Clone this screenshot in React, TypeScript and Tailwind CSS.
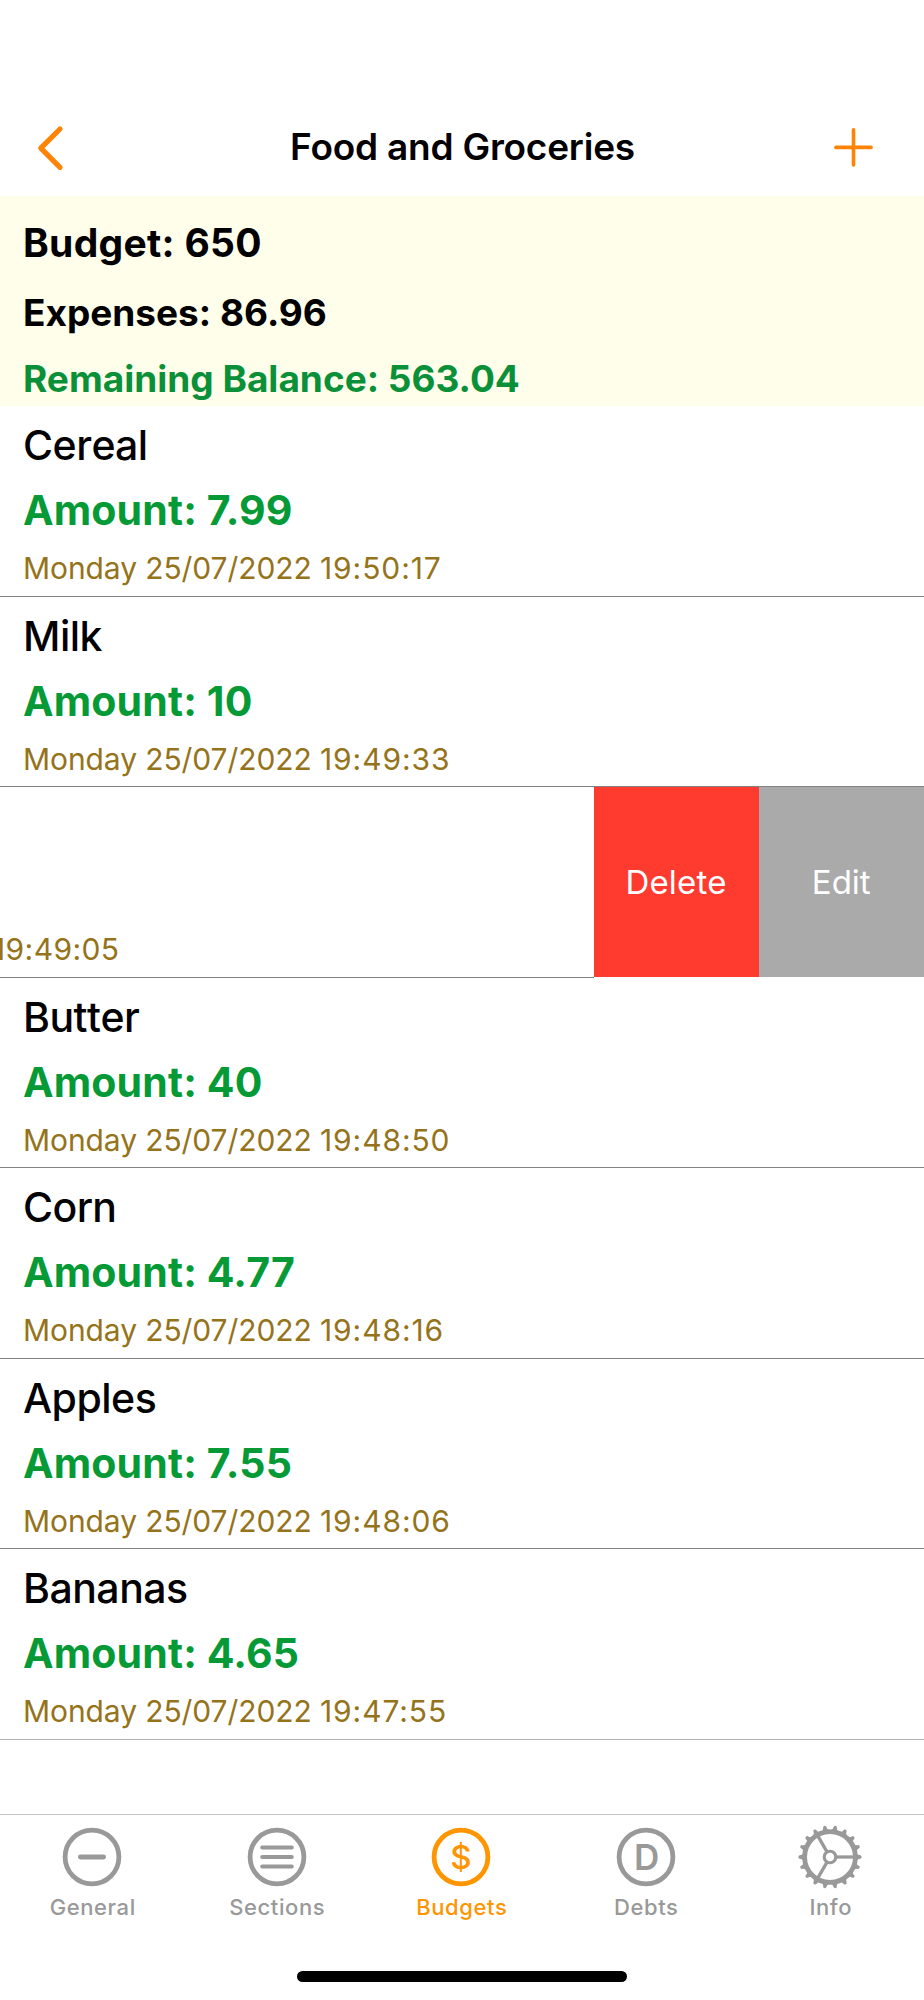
import type { ReactNode } from 'react';

type Expense = {
    id: number;
    name?: string;
    amount?: string;
    date: string;
    time: string;
    swiped?: boolean;
}

const expenses: Expense[] = [
    { id: 1, name: 'Cereal', amount: '7.99', date: 'Monday 25/07/2022', time: '19:50:17' },
    { id: 2, name: 'Milk', amount: '10', date: 'Monday 25/07/2022', time: '19:49:33' },
    { id: 3, date: 'Monday 25/07/2022', time: '19:49:05', swiped: true },
    { id: 4, name: 'Butter', amount: '40', date: 'Monday 25/07/2022', time: '19:48:50' },
    { id: 5, name: 'Corn', amount: '4.77', date: 'Monday 25/07/2022', time: '19:48:16' },
    { id: 6, name: 'Apples', amount: '7.55', date: 'Monday 25/07/2022', time: '19:48:06' },
    { id: 7, name: 'Bananas', amount: '4.65', date: 'Monday 25/07/2022', time: '19:47:55' },
];

const CircleIcon = ({ children }: { children: ReactNode }) => (
    <svg viewBox="-32 -32 64 64" className="w-16 h-16" fill="none" stroke="currentColor" strokeWidth="4.8" strokeLinecap="round">
        <circle r="26.9" />
        {children}
    </svg>
);

const GearIcon = () => (
    <svg viewBox="-32 -32 64 64" className="w-16 h-16" fill="none" stroke="currentColor">
        <circle r="25.4" strokeWidth="4.8" />
        {Array.from({ length: 18 }, (_, i) => (
            <path
                key={i}
                d="M26 -4 Q28.2 -1.7 31 -1.4 Q32.2 0 31 1.4 Q28.2 1.7 26 4 Z"
                fill="currentColor"
                stroke="none"
                transform={`rotate(${i * 20})`}
            />
        ))}
        {[0, 120, 240].map((angle) => (
            <path key={angle} d="M6 0H25" strokeWidth="3.3" transform={`rotate(${angle})`} />
        ))}
        <circle r="5.8" strokeWidth="3.1" />
    </svg>
);

const tabs = [
    { label: 'General', icon: <CircleIcon><path d="M-11.6 0H11.6" /></CircleIcon> },
    { label: 'Sections', icon: <CircleIcon><path d="M-14.8 -9.5H14.8M-14.8 0H14.8M-14.8 9.5H14.8" strokeWidth="4" /></CircleIcon> },
    {
        label: 'Budgets',
        active: true,
        icon: <CircleIcon><text x="0" y="11.8" textAnchor="middle" fill="currentColor" stroke="none" fontSize="33" fontWeight="500">$</text></CircleIcon>,
    },
    {
        label: 'Debts',
        icon: <CircleIcon><text x="0.6" y="12.6" textAnchor="middle" fill="currentColor" stroke="none" fontSize="35" fontWeight="600">D</text></CircleIcon>,
    },
    { label: 'Info', icon: <GearIcon /> },
];

const Timestamp = ({ expense }: { expense: Expense }) => (
    <p className="text-[30px] leading-[43px] text-[#94731a] whitespace-nowrap">
        <span className="tracking-[-0.09px]">{expense.date} </span>
        <span className={expense.swiped ? 'tracking-[0.4px]' : 'tracking-[0.9px]'}>{expense.time}</span>
    </p>
);

const ExpenseItem = ({ expense }: { expense: Expense }) => {
    if (expense.swiped) {
        return (
            <li className="flex h-[190.5px] overflow-hidden">
                <div className="w-[593.5px] shrink-0 pt-[141px] border-b border-[#828282]">
                    <div className="-ml-[304px]">
                        <Timestamp expense={expense} />
                    </div>
                </div>
                <button className="w-[165px] h-[190px] pt-0.5 bg-[#ff3b30] text-white text-[33px] tracking-[0.2px]">Delete</button>
                <button className="w-[165.5px] h-[190px] pt-0.5 bg-[#aaaaaa] text-white text-[33px]">Edit</button>
            </li>
        );
    }

    return (
        <li className="h-[190.5px] pt-2.5 pl-[23px] border-b border-[#828282] last:border-[#b0b0b0]">
            <h3 className="text-[41px] leading-[58px] tracking-[-0.5px] font-[450] [font-kerning:none]">{expense.name}</h3>
            <p className="text-[41px] leading-[73px] tracking-[0.15px] font-bold text-[#059a36]">Amount: {expense.amount}</p>
            <Timestamp expense={expense} />
        </li>
    );
};

const App = () => {
    return (
        <div className="w-[924px] h-[2000px] flex flex-col bg-white font-['Inter',sans-serif] text-black overflow-hidden">
            <header className="h-[196px] shrink-0 pt-[98px] px-8 flex justify-between items-center">
                <button aria-label="Back" className="w-16 text-[#ff8406]">
                    <svg viewBox="0 0 36 48" className="w-9 h-12" fill="none" stroke="currentColor" strokeWidth="5.2" strokeLinecap="round" strokeLinejoin="round">
                        <path d="M28 6L8.8 25.2L28 44.3" />
                    </svg>
                </button>
                <h1 className="pl-px text-[37px] leading-[50px] font-semibold tracking-[-0.22px]">Food and Groceries</h1>
                <button aria-label="Add" className="w-16 text-[#ff8406]">
                    <svg viewBox="0 0 48 48" className="w-12 h-12" fill="none" stroke="currentColor" strokeWidth="3.6" strokeLinecap="round">
                        <path d="M7.9 24.4H43.1M25.5 6.8V42" />
                    </svg>
                </button>
            </header>

            <section className="h-[210px] shrink-0 pt-px pl-[23px] bg-[#fffeeb] font-bold">
                <p className="text-[39px] leading-[92px] tracking-[0.3px]">Budget: 650</p>
                <p className="mt-px text-[37px] leading-[46px]">Expenses: 86.96</p>
                <p className="mt-5 text-[37px] leading-[45px] text-[#0a9038]">Remaining Balance: 563.04</p>
            </section>

            <ul className="flex-1">
                {expenses.map((expense) => (
                    <ExpenseItem key={expense.id} expense={expense} />
                ))}
            </ul>

            <nav className="h-[186px] shrink-0 flex flex-col border-t border-[#c6c6c6]">
                <div className="flex pt-[10px] pr-[1.5px]">
                    {tabs.map((tab) => (
                        <div key={tab.label} className={`flex-1 flex flex-col items-center ${tab.active ? 'text-[#ff9500]' : 'text-[#999999]'}`}>
                            {tab.icon}
                            <span className="mt-1 pl-px text-[22px] leading-[28px] font-[450] tracking-[0.6px]">{tab.label}</span>
                        </div>
                    ))}
                </div>
                <div className="mt-auto mb-[18px] mx-auto w-[330px] h-[11px] rounded-full bg-black" />
            </nav>
        </div>
    );
};

export default App;
